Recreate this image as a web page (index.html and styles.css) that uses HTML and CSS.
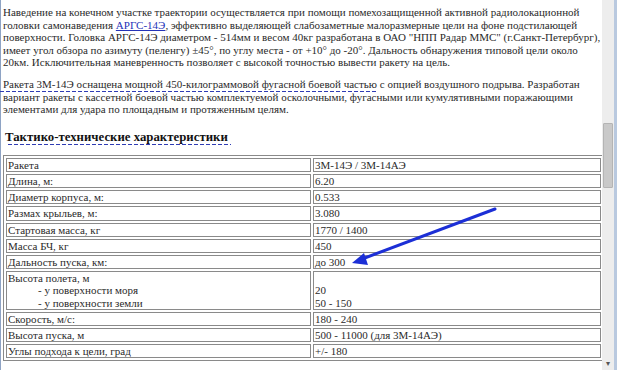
FILE: index.html
```html
<!DOCTYPE html>
<html lang="ru">
<head>
<meta charset="utf-8">
<title>3М-14Э</title>
<link rel="stylesheet" href="styles.css">
</head>
<body>
<div class="frame-left"></div>
<main class="page">
  <p class="text">Наведение на конечном участке траектории осуществляется при помощи помехозащищенной активной радиолокационной<br>головки самонаведения <a href="#" class="link">АРГС-14Э</a>, эффективно выделяющей слабозаметные малоразмерные цели на фоне подстилающей<br>поверхности. Головка АРГС-14Э диаметром - 514мм и весом 40кг разработана в ОАО "НПП Радар ММС" (г.Санкт-Петербург),<br>имеет угол обзора по азимуту (пеленгу) ±45°, по углу места - от +10° до -20°. Дальность обнаружения типовой цели около<br>20км. Исключительная маневренность позволяет с высокой точностью вывести ракету на цель.</p>
  <p class="text"><span class="dashed lead">Ракета 3М-14Э оснащена мощной 450-килограммовой фугасной боевой частью</span> с опцией воздушного подрыва. Разработан<br>вариант ракеты с кассетной боевой частью комплектуемой осколочными, фугасными или кумулятивными поражающими<br>элементами для удара по площадным и протяженным целям.</p>
  <h2 class="title"><span class="dashed">Тактико-технические характеристики</span></h2>
  <table class="specs">
    <tr><td class="label">Ракета</td><td>3М-14Э / 3М-14АЭ</td></tr>
    <tr><td class="label">Длина, м:</td><td>6.20</td></tr>
    <tr><td class="label">Диаметр корпуса, м:</td><td>0.533</td></tr>
    <tr><td class="label">Размах крыльев, м:</td><td>3.080</td></tr>
    <tr><td class="label">Стартовая масса, кг</td><td>1770 / 1400</td></tr>
    <tr><td class="label">Масса БЧ, кг</td><td>450</td></tr>
    <tr><td class="label">Дальность пуска, км:</td><td>до 300</td></tr>
    <tr><td class="label">Высота полета, м<br><span class="sub">- у поверхности моря</span><br><span class="sub">- у поверхности земли</span></td><td>&nbsp;<br>20<br>50 - 150</td></tr>
    <tr><td class="label">Скорость, м/с:</td><td>180 - 240</td></tr>
    <tr><td class="label">Высота пуска, м</td><td>500 - 11000 (для 3М-14АЭ)</td></tr>
    <tr><td class="label">Углы подхода к цели, град</td><td>+/- 180</td></tr>
  </table>
  <svg class="arrow" width="617" height="370" viewBox="0 0 617 370" aria-hidden="true">
    <line x1="497" y1="209" x2="364" y2="259" stroke="#1c2fd6" stroke-width="3" stroke-linecap="round"/>
    <polygon points="354,263 366,253 370,265" fill="#1c2fd6"/>
  </svg>
</main>
<div class="scrollbar">
  <div class="thumb"></div>
  <div class="down">▾</div>
</div>
<div class="frame-right"></div>
</body>
</html>
```

FILE: styles.css
```css
html, body {
  margin: 0;
  padding: 0;
  background: #fff;
}
body {
  display: flex;
  height: 370px;
  overflow: hidden;
  font-family: "Liberation Serif", "Times New Roman", serif;
  color: #2a2a2a;
}
.frame-left {
  width: 1px;
  background: #8ea3c4;
  flex: none;
}
.page {
  flex: 1;
  min-width: 0;
  padding: 6px 0 0 2px;
  position: relative;
}
.text {
  margin: 0 0 9px 0;
  font-size: 11px;
  line-height: 12.6px;
  white-space: nowrap;
}
.link {
  color: #2433b8;
  text-decoration: underline;
}
.dashed {
  background-image: repeating-linear-gradient(to right, #2f3cb4 0 4px, transparent 4px 6px);
  background-size: 100% 1px;
  background-position: 0 100%;
  background-repeat: no-repeat;
  padding-bottom: 2px;
}
.lead {
  margin-left: -3px;
  padding-left: 3px;
}
.title {
  margin: 14px 0 10px 2px;
  font-size: 12.8px;
  line-height: 15px;
  font-weight: bold;
  color: #111;
}
.title .dashed {
  padding-bottom: 1px;
  padding-right: 3px;
  background-position: 3px 100%;
}
.specs {
  width: 601px;
  border: 1px solid #8a8a8a;
  border-spacing: 2px;
  font-size: 11px;
  line-height: 12.2px;
}
.specs td {
  border: 1px solid #8a8a8a;
  padding: 0 1px;
  vertical-align: top;
}
.specs .label {
  width: 301px;
}
.sub {
  padding-left: 30px;
}
.arrow {
  position: absolute;
  left: -3px;
  top: 0;
  pointer-events: none;
}
.scrollbar {
  width: 12px;
  flex: none;
  background: #ededed;
  position: relative;
  display: flex;
  flex-direction: column;
}
.thumb {
  margin: 123px 1px 0 1px;
  height: 63px;
  background: #c9c9c9;
  border: 1px solid #b4b4b4;
  border-radius: 1px;
}
.down {
  margin-top: auto;
  font-size: 8px;
  line-height: 8px;
  text-align: center;
  color: #555;
  padding-bottom: 2px;
}
.frame-right {
  width: 3px;
  flex: none;
  background: #b9c9df;
}
```
